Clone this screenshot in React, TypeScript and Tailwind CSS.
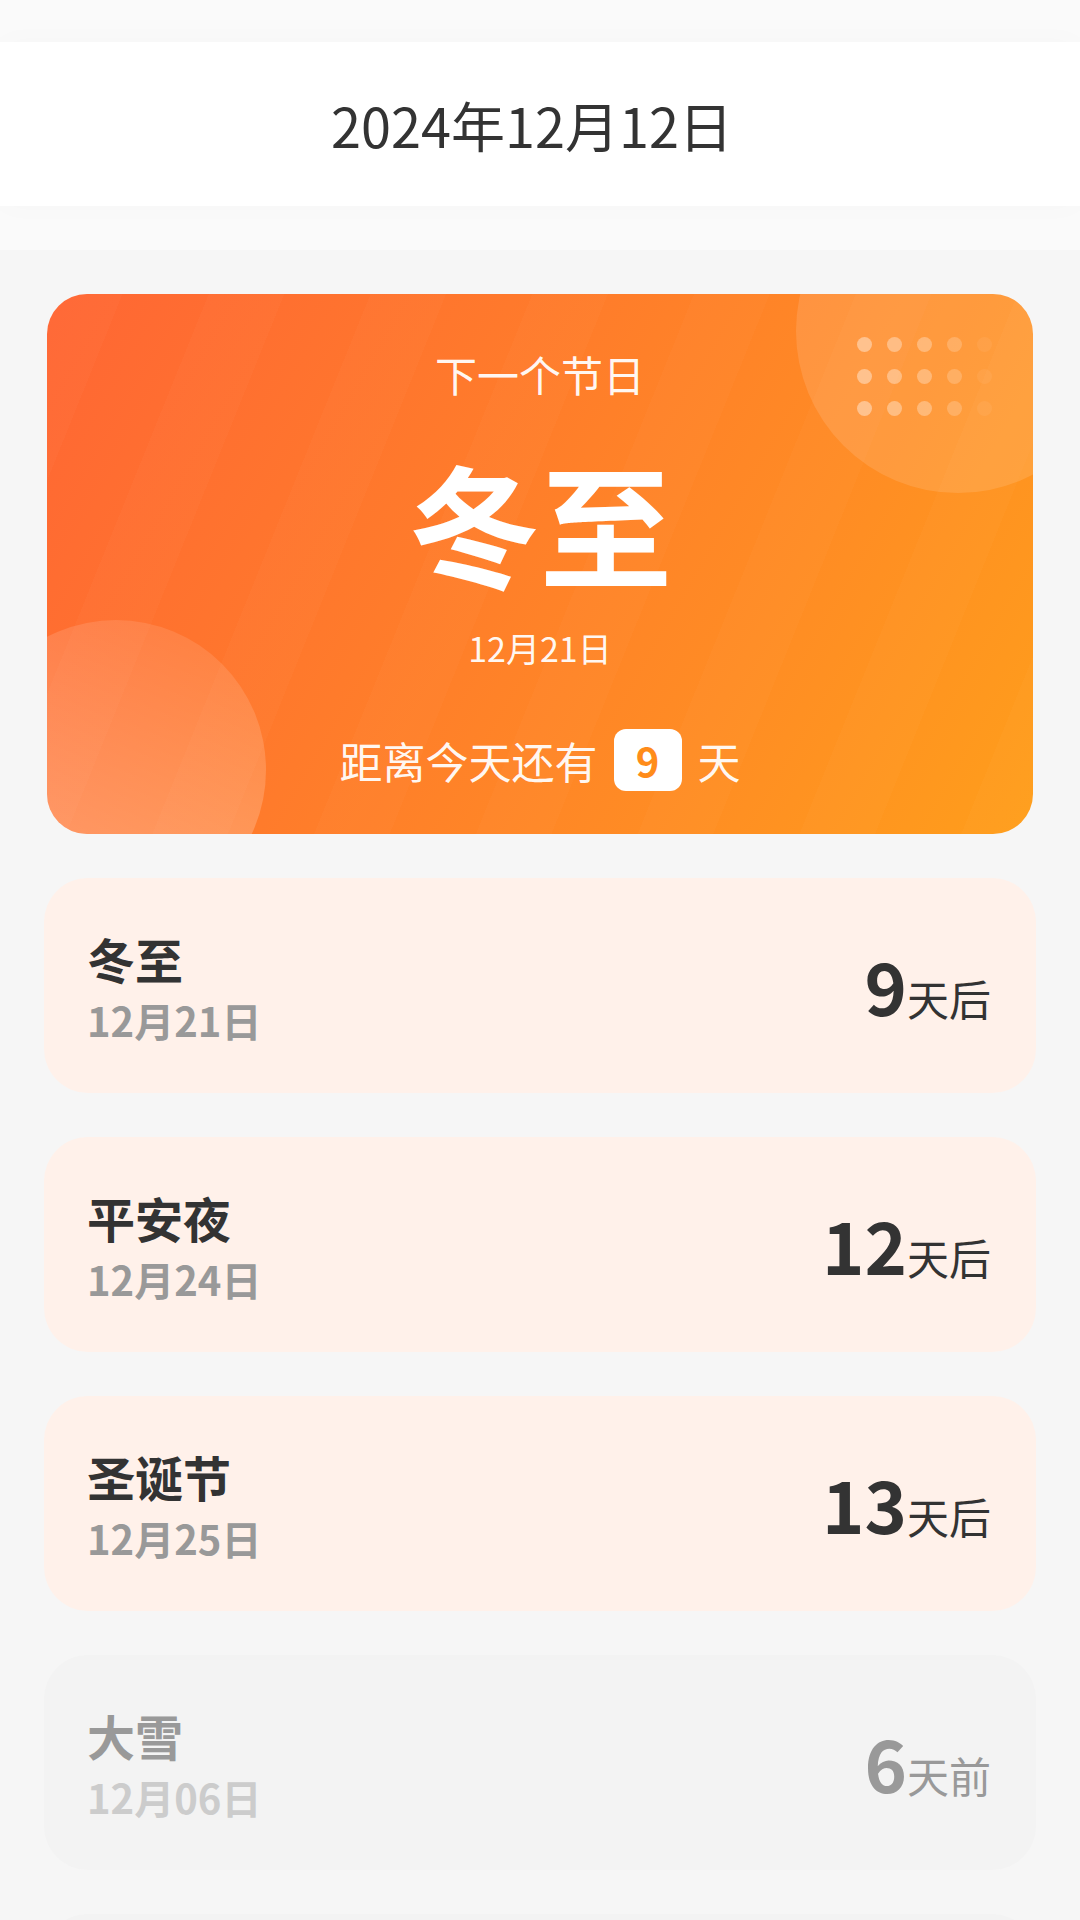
import React from "react";

type Holiday = {
    name: string;
    date: string;
    days: number;
    past?: boolean;
};

const HOLIDAYS: Holiday[] = [
    { name: "冬至", date: "12月21日", days: 9 },
    { name: "平安夜", date: "12月24日", days: 12 },
    { name: "圣诞节", date: "12月25日", days: 13 },
    { name: "大雪", date: "12月06日", days: 6, past: true },
    { name: "小雪", date: "11月22日", days: 20, past: true },
];

const DOT_OPACITY = ["opacity-40", "opacity-35", "opacity-30", "opacity-20", "opacity-[0.06]"];

function HeroCard() {
    return (
        <div className="relative mx-[3px] h-[540px] rounded-[40px] overflow-hidden bg-[linear-gradient(120deg,#ff6634_0%,#ff7b2b_40%,#ff8c24_70%,#ff9e1b_100%)]">
            {/* faint diagonal stripes */}
            <div className="absolute inset-0 bg-[repeating-linear-gradient(112deg,rgba(255,255,255,0.02)_0px,rgba(255,255,255,0.02)_70px,transparent_70px,transparent_150px)]" />
            {/* decorative circles */}
            <div className="absolute left-[749px] top-[-125px] w-[324px] h-[324px] rounded-full bg-white/12" />
            <div className="absolute left-[-81px] top-[326px] w-[300px] h-[300px] rounded-full bg-[linear-gradient(200deg,rgba(255,255,255,0.08),rgba(255,255,255,0.32))]" />
            {/* dots */}
            <div className="absolute left-[810px] top-[43px] grid grid-cols-5 gap-x-[15px] gap-y-[17px]">
                {Array.from({ length: 15 }).map((_, i) => (
                    <span key={i} className={`block w-[15px] h-[15px] rounded-full bg-white ${DOT_OPACITY[i % 5]}`} />
                ))}
            </div>

            <div className="relative flex flex-col items-center text-white">
                <p className="pt-[55px] text-[42px] leading-[50px] text-white/95">下一个节日</p>
                <p className="mt-[52px] text-[132px] leading-[140px] font-bold">冬至</p>
                <p className="mt-[37px] text-[34px] leading-[40px] text-white/95">12月21日</p>
                <div className="mt-[61px] flex items-center text-[43px] leading-[50px] text-white/95">
                    <span>距离今天还有</span>
                    <span className="mx-[16px] flex items-center justify-center w-[68px] h-[62px] rounded-[12px] bg-white text-[#ff8c1a] text-[40px] font-bold">
                        9
                    </span>
                    <span>天</span>
                </div>
            </div>
        </div>
    );
}

function HolidayRow({ item }: { item: Holiday }) {
    const past = item.past;
    return (
        <div
            className={`h-[215px] shrink-0 rounded-[44px] pl-[43px] pr-[45px] flex items-center justify-between ${
                past ? "bg-[#f3f3f3]" : "bg-[#fff1ea]"
            }`}
        >
            <div className="flex flex-col gap-[11px] pt-[2px]">
                <span className={`text-[48px] leading-[56px] font-bold ${past ? "text-[#999]" : "text-[#333]"}`}>
                    {item.name}
                </span>
                <span className={`text-[40px] leading-[46px] font-bold ${past ? "text-[#ccc]" : "text-[#999]"}`}>
                    {item.date}
                </span>
            </div>
            <div className={`flex items-baseline pb-[2px] ${past ? "text-[#999]" : "text-[#333]"}`}>
                <span className="text-[72px] leading-none font-bold">{item.days}</span>
                <span className="text-[42px] leading-none">{past ? "天前" : "天后"}</span>
            </div>
        </div>
    );
}

export default function App() {
    return (
        <div className="min-h-screen bg-[#f6f6f6] font-['Noto_Sans_CJK_SC','Noto_Sans',sans-serif]">
            <header className="bg-[#fafafa] pt-[42px] pb-[44px]">
                <div className="h-[164px] bg-white flex items-center justify-center shadow-[0_0_30px_rgba(0,0,0,0.02)]">
                    <h1 className="text-[54px] font-normal text-[#333] pr-[16px]">2024年12月12日</h1>
                </div>
            </header>

            <main className="px-[44px] pt-[44px] flex flex-col gap-[44px]">
                <HeroCard />
                <div className="flex flex-col gap-[44px]">
                    {HOLIDAYS.map((h) => (
                        <HolidayRow key={h.name} item={h} />
                    ))}
                </div>
            </main>
        </div>
    );
}
